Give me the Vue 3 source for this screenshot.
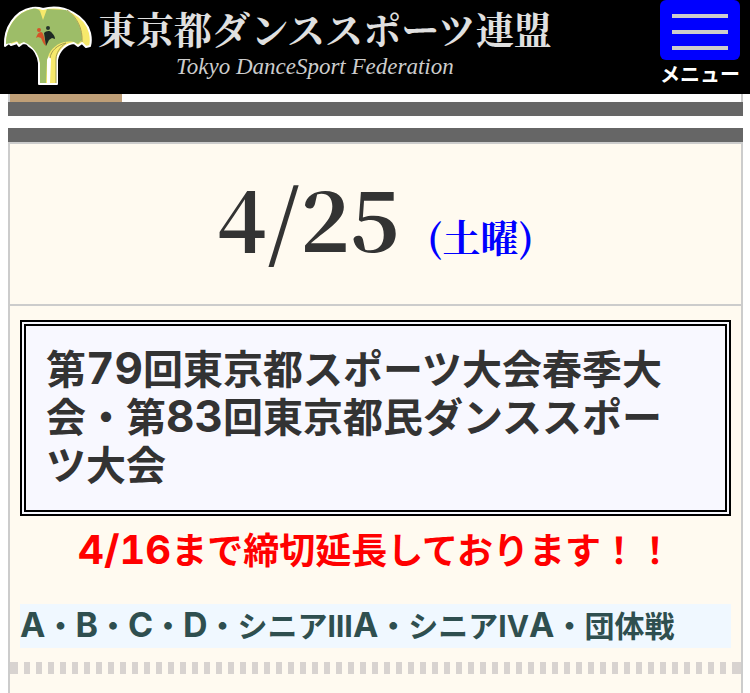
<template>
  <div class="page">
    <header class="header">
      <a class="brand" href="#">
        <svg class="brand-logo" viewBox="0 0 98 90" aria-hidden="true">
          <path
            d="M39 84 L39 63 C38 55 34 49 29 46 C28 44 25 43 23 43 L19 46 L17 43 L11 45 L9 43 L5 46 C4 28 15 11 32 8 C37 7 40 8 43 9 C65 3 86 17 90 33 C91 38 91 43 90 46 L86 47 L82 43 L78 46 L74 43 C66 44 59 50 57 60 L57 84 Z"
            fill="#f7e96b"
            stroke="#fff"
            stroke-width="2"
            stroke-linejoin="round"
          />
          <path
            d="M40 83 L40 63 C39 54 33 46 24 42 L19 44 L17 41 L11 43 L6 44 C6 27 17 12 32 9 C36 8 38 9 40 11 L43 20 L47 9 L66 10 C77 17 82 29 82 40 L78 44 L74 42 C65 40 54 44 49 54 L47 60 L46 83 Z"
            fill="#9dbd68"
          />
          <path d="M49 56 L51 59 L50 83 L47 83 L47 60 Z" fill="#fff" />
          <path d="M67 10 C77 17 83 29 82 42" fill="none" stroke="#a3a259" stroke-width="1" />
          <path d="M50 58 C51 51 57 45 66 43 C60 47 56 53 56 59 L56 83" fill="none" stroke="#a39d51" stroke-width="1" />
          <circle cx="39" cy="30" r="2" fill="#d45428" />
          <circle cx="48" cy="28" r="2" fill="#26342b" />
          <path d="M36 38 C37 34 39 32 41 32 C43 32 44 36 46 46 C43 44 42 40 41 38 L38 37 Z" fill="#d45428" />
          <path d="M44 33 C46 31 50 30 52 33 C54 35 55 37 55 39 L52 38 L49 40 L46 46 Z" fill="#1e2923" />
        </svg>
        <span class="brand-text">
          <span class="brand-name">東京都ダンススポーツ連盟</span>
          <span class="brand-sub">Tokyo DanceSport Federation</span>
        </span>
      </a>
      <button class="menu" type="button">
        <span class="menu-icon">
          <span v-for="n in 3" :key="n" class="menu-bar"></span>
        </span>
        <span>メニュー</span>
      </button>
    </header>

    <main class="schedule">
      <div class="previous">
        <div class="previous-tag"></div>
      </div>
      <div class="rule"></div>
      <div class="rule rule-next"></div>

      <article class="event">
        <h2 class="date">
          <span>{{ event.date }}</span>
          <span class="weekday">({{ event.weekday }})</span>
        </h2>
        <div class="detail">
          <h3 class="title">
            <template v-for="(run, i) in split(event.title)" :key="i"><span v-if="run.latin" class="latin">{{ run.text }}</span><template v-else>{{ run.text }}</template></template>
          </h3>
          <p class="notice">
            <template v-for="(run, i) in split(event.notice)" :key="i"><span v-if="run.latin" class="latin">{{ run.text }}</span><template v-else>{{ run.text }}</template></template>
          </p>
          <p class="classes">
            <template v-for="(run, i) in split(event.classes.join('・'))" :key="i"><span v-if="run.latin" class="latin">{{ run.text }}</span><template v-else>{{ run.text }}</template></template>
          </p>
        </div>
        <div class="separator"></div>
      </article>
    </main>
  </div>
</template>

<script setup>
const event = {
  date: '4/25',
  weekday: '土曜',
  title: '第79回東京都スポーツ大会春季大会・第83回東京都民ダンススポーツ大会',
  notice: '4/16まで締切延長しております！！',
  classes: ['A', 'B', 'C', 'D', 'シニアⅢA', 'シニアⅣA', '団体戦'],
}

// Latin runs are set a little larger than the kana and kanji around them
function split(text) {
  return text.match(/[\x20-\x7e]+|[^\x20-\x7e]+/g).map((run) => ({
    text: run,
    latin: /^[\x20-\x7e]/.test(run),
  }))
}
</script>

<style>
body {
  margin: 0;
  background: #fff;
}
</style>

<style scoped>
.page {
  display: flex;
  flex-direction: column;
  min-height: 100vh;
  color: #333;
  font-family: Inter, "Noto Sans CJK JP", sans-serif;
}

.latin {
  font-variant-numeric: tabular-nums;
  line-height: 1;
}

/* header */
.header {
  display: flex;
  justify-content: space-between;
  align-items: flex-start;
  height: 94px;
  padding-right: 10px;
  background: #000;
}

.brand {
  display: flex;
  color: #e0e0e0;
  text-decoration: none;
}

.brand-logo {
  width: 98px;
  height: 90px;
}

.brand-text {
  display: flex;
  flex-direction: column;
  align-items: center;
  gap: 4px;
  padding-top: 8px;
  white-space: nowrap;
}

.brand-name {
  font-family: "Noto Serif CJK JP", "Noto Sans CJK JP", serif;
  font-size: 38px;
  font-weight: bold;
  line-height: 40px;
}

.brand-sub {
  padding-right: 20px;
  color: #ccc;
  font-family: "Liberation Serif", serif;
  font-size: 23px;
  font-style: italic;
  line-height: 30px;
}

.menu {
  display: flex;
  flex-direction: column;
  align-items: center;
  padding: 0;
  border: 0;
  background: none;
  color: #fff;
  font-family: "Noto Sans CJK JP", sans-serif;
  font-size: 20px;
  font-weight: bold;
  line-height: 28px;
  cursor: pointer;
}

.menu-icon {
  display: flex;
  flex-direction: column;
  justify-content: center;
  gap: 12px;
  box-sizing: border-box;
  width: 80px;
  height: 60px;
  padding: 4px 12px 0;
  border-radius: 6px;
  background: #00f;
}

.menu-bar {
  height: 4px;
  background: #ccc;
}

/* schedule */
.schedule {
  display: flex;
  flex: 1;
  flex-direction: column;
  margin: 0 7px 0 8px;
}

.previous {
  border: solid #ccc;
  border-width: 0 2px;
}

.previous-tag {
  width: 112px;
  height: 8px;
  background: #bf9f77;
}

.rule {
  height: 14px;
  background: #666;
}

.rule-next {
  margin-top: 12px;
}

.event {
  flex: 1;
  border: 2px solid #ccc;
  border-bottom: 0;
  background: #fffaf0;
}

.date {
  display: flex;
  justify-content: center;
  align-items: baseline;
  gap: 28px;
  margin: 0;
  padding: 32px 0 48px;
  border-bottom: 2px solid #ccc;
  font-family: "Noto Serif CJK JP", "Noto Sans CJK JP", serif;
  font-size: 84px;
  font-weight: bold;
  line-height: 80px;
}

.weekday {
  color: #00f;
  font-size: 38px;
  line-height: 40px;
}

.detail {
  padding: 14px 10px;
}

.title {
  margin: 0;
  padding: 20px 40px 20px 20px;
  border: 6px double #000;
  background: #f8f8ff;
  font-size: 40px;
  font-weight: bold;
  line-height: 48px;
}

.title .latin {
  font-size: 44px;
}

.notice {
  margin: 14px 0 32px;
  color: #f00;
  font-size: 36px;
  font-weight: bold;
  line-height: 42px;
  text-align: center;
}

.notice .latin {
  font-size: 40px;
}

.classes {
  margin: 0;
  background: #f0f8ff;
  color: #2f4f4f;
  font-size: 30px;
  font-weight: bold;
  line-height: 44px;
}

.classes .latin {
  font-size: 34px;
}

.separator {
  height: 12px;
  border: solid #d8d3d0;
  border-width: 0 8px 0 2px;
  background: repeating-linear-gradient(90deg, #d8d3d0 0 6px, transparent 6px 12px) padding-box;
}
</style>
